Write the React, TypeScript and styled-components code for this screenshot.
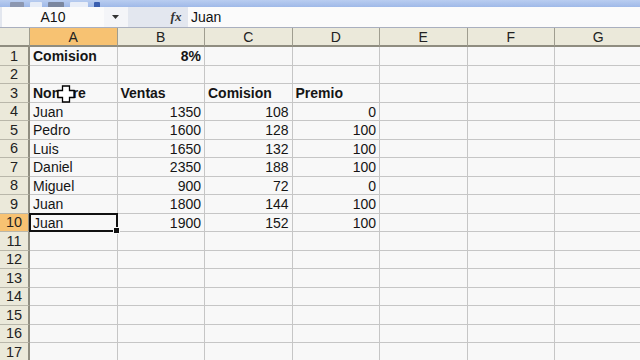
import React from "react";
import styled, { createGlobalStyle } from "styled-components";

const Global = createGlobalStyle`
  html, body { margin: 0; padding: 0; background: #f8f8f8; overflow: hidden; }
  body { font-family: "Liberation Sans", Arial, sans-serif; }
`;

const Page = styled.div`
  width: 640px;
  height: 360px;
  overflow: hidden;
  display: flex;
  flex-direction: column;
  position: relative;
  background: #f8f8f8;
`;

const Toolbar = styled.div`
  height: 7px;
  flex: none;
  background: linear-gradient(#b9cdf0, #9fb9e8);
  display: flex;
  align-items: flex-end;
  gap: 6px;
  padding-left: 10px;
  overflow: hidden;
`;

const ToolIcon = styled.div<{ $w: number; $c: string }>`
  width: ${(p) => p.$w}px;
  height: 5px;
  background: ${(p) => p.$c};
  border-radius: 1px 1px 0 0;
`;

const FormulaBar = styled.div`
  height: 20px;
  flex: none;
  display: flex;
  align-items: stretch;
  background: #e3e7ef;
  border-bottom: 1px solid #a9afbf;
`;

const NameBox = styled.div`
  width: 102px;
  margin-left: 2px;
  background: #fbfbfb;
  display: flex;
  align-items: center;
  justify-content: center;
  font-size: 14px;
  color: #111;
`;

const DropButton = styled.div`
  width: 24px;
  display: flex;
  align-items: center;
  justify-content: center;
  background: #f4f5f8;
`;

const Spacer = styled.div`
  width: 40px;
`;

const FxLabel = styled.div`
  width: 16px;
  display: flex;
  align-items: center;
  justify-content: center;
  font-family: "Liberation Serif", serif;
  font-style: italic;
  font-weight: bold;
  font-size: 13px;
  color: #333;
`;

const FormulaInput = styled.div`
  flex: 1;
  background: #fbfbfb;
  margin-left: 4px;
  display: flex;
  align-items: center;
  padding-left: 3px;
  font-size: 14px;
  color: #111;
`;

const Sheet = styled.div`
  display: grid;
  grid-template-columns: 30px repeat(7, 87.5px);
  grid-template-rows: 19px;
  grid-auto-rows: 18.5px;
  flex: none;
`;

const ColHead = styled.div<{ $active?: boolean }>`
  background: ${(p) => (p.$active ? "#f7c272" : "#ebe9da")};
  border-right: 1px solid #9f9d8f;
  border-bottom: 2px solid #8f8d80;
  display: flex;
  align-items: center;
  justify-content: center;
  font-size: 14px;
  color: #222;
  box-sizing: border-box;
`;

const RowHead = styled.div<{ $active?: boolean }>`
  background: ${(p) => (p.$active ? "#f7c272" : "#ebe9da")};
  border-right: 2px solid #8f8d80;
  border-bottom: 1px solid #b9b7aa;
  display: flex;
  align-items: center;
  justify-content: center;
  font-size: 14.5px;
  color: #222;
  box-sizing: border-box;
`;

const Cell = styled.div<{ $right?: boolean; $bold?: boolean; $selected?: boolean }>`
  position: relative;
  background: #f8f8f8;
  border-right: 1px solid #c6c6c6;
  border-bottom: 1px solid #c6c6c6;
  box-sizing: border-box;
  display: flex;
  align-items: center;
  justify-content: ${(p) => (p.$right ? "flex-end" : "flex-start")};
  padding: 1px 3px 0 3px;
  font-size: 14px;
  font-weight: ${(p) => (p.$bold ? "bold" : "normal")};
  color: #151515;
  white-space: nowrap;
  &::after {
    content: "";
    display: ${(p) => (p.$selected ? "block" : "none")};
    position: absolute;
    left: -1px;
    top: -1px;
    right: -1px;
    bottom: -1px;
    border: 2px solid #111;
    pointer-events: none;
  }
  &::before {
    content: "";
    display: ${(p) => (p.$selected ? "block" : "none")};
    position: absolute;
    right: -3px;
    bottom: -3px;
    width: 5px;
    height: 5px;
    background: #111;
    border: 1px solid #f8f8f8;
    z-index: 2;
  }
`;

const Cursor = styled.svg`
  position: absolute;
  left: 57px;
  top: 85px;
`;

type CellData = { v: string; right?: boolean; bold?: boolean };

const cols = ["A", "B", "C", "D", "E", "F", "G"];

const data: Record<number, CellData[]> = {
  1: [{ v: "Comision", bold: true }, { v: "8%", right: true, bold: true }],
  3: [
    { v: "Nombre", bold: true },
    { v: "Ventas", bold: true },
    { v: "Comision", bold: true },
    { v: "Premio", bold: true },
  ],
  4: [{ v: "Juan" }, { v: "1350", right: true }, { v: "108", right: true }, { v: "0", right: true }],
  5: [{ v: "Pedro" }, { v: "1600", right: true }, { v: "128", right: true }, { v: "100", right: true }],
  6: [{ v: "Luis" }, { v: "1650", right: true }, { v: "132", right: true }, { v: "100", right: true }],
  7: [{ v: "Daniel" }, { v: "2350", right: true }, { v: "188", right: true }, { v: "100", right: true }],
  8: [{ v: "Miguel" }, { v: "900", right: true }, { v: "72", right: true }, { v: "0", right: true }],
  9: [{ v: "Juan" }, { v: "1800", right: true }, { v: "144", right: true }, { v: "100", right: true }],
  10: [{ v: "Juan" }, { v: "1900", right: true }, { v: "152", right: true }, { v: "100", right: true }],
};

const rows = Array.from({ length: 17 }, (_, i) => i + 1);

export default function App() {
  return (
    <Page>
      <Global />
      <Toolbar>
        <ToolIcon $w={14} $c="#8c97b0" />
        <ToolIcon $w={12} $c="#e6ecf7" />
        <ToolIcon $w={16} $c="#7b879f" />
        <ToolIcon $w={18} $c="#e9eef8" />
        <ToolIcon $w={6} $c="#3a5fb0" />
      </Toolbar>
      <FormulaBar>
        <NameBox>A10</NameBox>
        <DropButton>
          <svg width="8" height="5" viewBox="0 0 8 5">
            <path d="M0 0 H7 L3.5 4 Z" fill="#333" />
          </svg>
        </DropButton>
        <Spacer />
        <FxLabel>fx</FxLabel>
        <FormulaInput>Juan</FormulaInput>
      </FormulaBar>
      <Sheet>
        <ColHead />
        {cols.map((c) => (
          <ColHead key={c} $active={c === "A"}>
            {c}
          </ColHead>
        ))}
        {rows.map((r) => (
          <React.Fragment key={r}>
            <RowHead $active={r === 10}>{r}</RowHead>
            {cols.map((c, ci) => {
              const d = data[r]?.[ci];
              return (
                <Cell
                  key={c}
                  $right={d?.right}
                  $bold={d?.bold}
                  $selected={r === 10 && ci === 0}
                >
                  {d?.v ?? ""}
                </Cell>
              );
            })}
          </React.Fragment>
        ))}
      </Sheet>
      <Cursor width="18" height="18" viewBox="0 0 18 18">
        <path
          d="M5.5 1 H12.5 V5.5 H17 V12.5 H12.5 V17 H5.5 V12.5 H1 V5.5 H5.5 Z"
          fill="#fff"
          stroke="#000"
          strokeWidth="1.3"
        />
      </Cursor>
    </Page>
  );
}
